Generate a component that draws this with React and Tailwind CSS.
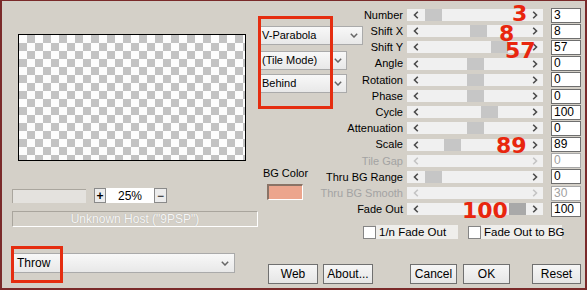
import React from "react";

const rows = [
  { label: "Number", value: "3", thumb: 18 },
  { label: "Shift X", value: "8", thumb: 63 },
  { label: "Shift Y", value: "57", thumb: 84 },
  { label: "Angle", value: "0", thumb: 60 },
  { label: "Rotation", value: "0", thumb: 60 },
  { label: "Phase", value: "0", thumb: 60 },
  { label: "Cycle", value: "100", thumb: 74 },
  { label: "Attenuation", value: "0", thumb: 60 },
  { label: "Scale", value: "89", thumb: 37 },
  { label: "Tile Gap", value: "0", disabled: true },
  { label: "Thru BG Range", value: "0", thumb: 18 },
  { label: "Thru BG Smooth", value: "30", disabled: true },
  { label: "Fade Out", value: "100", thumb: 102, dark: true },
];

const Chev = ({ right, color = "#4b4b4b" }) => (
  <svg width="6" height="8" viewBox="0 0 6 8">
    <path
      d={right ? "M1.2 0.8 L4.5 4 L1.2 7.2" : "M4.8 0.8 L1.5 4 L4.8 7.2"}
      fill="none"
      stroke={color}
      strokeWidth="1.6"
    />
  </svg>
);

const Down = () => (
  <svg width="8" height="5" viewBox="0 0 8 5">
    <path d="M0.8 0.8 L4 4 L7.2 0.8" fill="none" stroke="#666" strokeWidth="1.5" />
  </svg>
);

const Select = ({ text, className }) => (
  <div
    className={`flex items-center justify-between bg-gradient-to-b from-[#f8f8f8] to-[#e8e8e8] border border-[#aaaaaa] pl-[3px] pr-[4px] ${className}`}
  >
    <span>{text}</span>
    <Down />
  </div>
);

const Slider = ({ row }) => (
  <div className="ml-[4px] w-[136px] h-[12px] bg-[#f0f0f0] relative flex items-center justify-between pl-[6px] pr-[5px]">
    {!row.disabled && (
      <div
        className={`absolute top-0 h-[12px] w-[17px] ${row.dark ? "bg-[#a9a9a9]" : "bg-[#c6c6c6]"}`}
        style={{ left: row.thumb }}
      />
    )}
    <Chev color={row.disabled ? "#c4c4c4" : "#4b4b4b"} />
    <Chev right color={row.disabled ? "#c4c4c4" : "#4b4b4b"} />
  </div>
);

const Btn = ({ children, className }) => (
  <div
    className={`h-[20px] flex items-center justify-center bg-gradient-to-b from-[#f6f6f6] to-[#e6e6e6] border border-[#707070] text-[12px] ${className}`}
  >
    {children}
  </div>
);

export default function App() {
  return (
    <div className="w-[587px] h-[290px] bg-[#d4d0c8] relative overflow-hidden border-t border-l-2 border-r-2 border-b-2 border-[#7a2a2a] flex font-['Liberation_Sans',Arial,sans-serif] text-[11px] text-black">
      {/* left panel */}
      <div className="w-[256px] flex flex-col">
        <div className="ml-[16px] mt-[33px] w-[228px] h-[127px] border border-black bg-[conic-gradient(#c3c3c3_25%,#fdfdfd_0_50%,#c3c3c3_0_75%,#fdfdfd_0)] bg-size-[16px_16px]" />
        <div className="ml-[10px] mt-[27px] flex items-center h-[15px]">
          <div className="w-[74px] h-[14px] bg-[#e4e2de] border-t border-l border-[#aaa69e]" />
          <div className="ml-[8px] w-[12px] h-[15px] bg-[#ececec] border border-[#8a8a8a] flex items-center justify-center font-bold text-[12px] leading-none">
            +
          </div>
          <div className="w-[48px] h-[15px] bg-white flex items-center justify-center text-[12px]">
            25%
          </div>
          <div className="w-[13px] h-[15px] bg-[#ececec] border border-[#8a8a8a] flex items-center justify-center text-[12px] leading-none">
            −
          </div>
        </div>
        <div className="ml-[10px] mt-[8px] w-[246px] h-[16px] border-t border-l border-[#a9a59d] border-b-white border-r-white border-b border-r flex items-center justify-center text-[12px] text-[#f7f7f7] [text-shadow:0_0_1px_#aaa69e]">
          Unknown Host ("9PSP")
        </div>
        <Select text="Throw" className="ml-[10px] mt-[26px] w-[223px] h-[20px] text-[12px] pl-[4px] pr-[5px]" />
      </div>

      {/* right part */}
      <div className="flex-1 flex flex-col">
        <div className="flex">
          <div className="w-[105px] flex flex-col">
            <Select text="V-Parabola" className="mt-[25px] w-[105px] h-[19px]" />
            <Select text="(Tile Mode)" className="mt-[6px] w-[89px] h-[19px]" />
            <Select text="Behind" className="mt-[4px] w-[89px] h-[19px]" />
            <div className="mt-[74px] ml-[7px] w-[41px] whitespace-nowrap flex justify-center leading-[13px]">BG Color</div>
            <div className="mt-[4px] ml-[9px] w-[36px] h-[16px] bg-[#eca58d] border-t-2 border-l-2 border-[#8a7366] border-b border-r border-b-white border-r-white" />
          </div>
          <div className="pt-[6px] flex flex-col">
            {rows.map((r) => (
              <div key={r.label} className="h-[16.2px] flex items-center">
                <div className="w-[40px] flex justify-end">
                  <span
                    className={`shrink-0 whitespace-nowrap ${r.disabled ? "text-[#a3a3a3]" : "text-black"}`}
                  >
                    {r.label}
                  </span>
                </div>
                <Slider row={r} />
                <div
                  className={`ml-[8px] w-[30px] h-[15px] bg-white border pl-[2px] text-[12px] leading-[13px] ${
                    r.disabled ? "border-[#a8a8a8] text-[#a0a0a0]" : "border-[#6f6f6f] text-black"
                  }`}
                >
                  {r.value}
                </div>
              </div>
            ))}
          </div>
        </div>

        <div className="ml-[105px] mt-[8px] flex items-center text-[11.5px] whitespace-nowrap">
          <div className="w-[13px] h-[13px] bg-white border border-[#858585]" />
          <div className="w-[82px] h-[14px] bg-[#efeeeb] pl-[3px] leading-[14px]">1/n Fade Out</div>
          <div className="ml-[10px] w-[13px] h-[13px] bg-white border border-[#858585]" />
          <div className="w-[81px] h-[14px] bg-[#efeeeb] pl-[3px] leading-[14px]">Fade Out to BG</div>
        </div>

        <div className="mt-[25px] flex">
          <Btn className="ml-[10px] w-[50px]">Web</Btn>
          <Btn className="ml-[5px] w-[50px]">About...</Btn>
          <Btn className="ml-[37px] w-[47px]">Cancel</Btn>
          <Btn className="ml-[6px] w-[47px]">OK</Btn>
          <Btn className="ml-[22px] w-[49px]">Reset</Btn>
        </div>
      </div>

      {/* annotations */}
      <div className="absolute left-[256px] top-[15px] w-[75px] h-[93px] border-[3px] border-[#e52d10]" />
      <div className="absolute left-[9px] top-[245px] w-[52px] h-[37px] border-[3px] border-[#e52d10]" />
      <div className="absolute inset-0 pointer-events-none font-['DejaVu_Sans',sans-serif] font-bold text-[22px] leading-[16px] text-[#e8260e]">
        <span className="absolute left-[510px] top-[5px]">3</span>
        <span className="absolute left-[497px] top-[25px]">8</span>
        <span className="absolute left-[503px] top-[42px]">57</span>
        <span className="absolute left-[494px] top-[137px]">89</span>
        <span className="absolute left-[460px] top-[202px]">100</span>
      </div>
    </div>
  );
}
